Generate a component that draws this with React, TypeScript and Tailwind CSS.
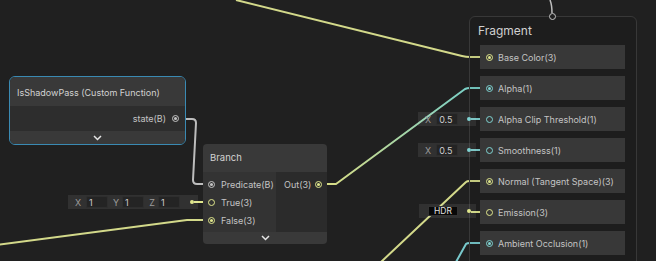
const tones = {
  yellow: { ring: "border-[#dfe68c]", dot: "bg-[#dfe68c]" },
  teal: { ring: "border-[#7fd3d2]", dot: "bg-[#7fd3d2]" },
  gray: { ring: "border-[#c4c4c4]", dot: "bg-[#c4c4c4]" },
};

type Tone = keyof typeof tones;

const Port = ({ tone, filled }: { tone: Tone; filled?: boolean }) => (
  <span
    className={`w-[7px] h-[7px] rounded-full border flex items-center justify-center shrink-0 ${tones[tone].ring}`}
  >
    {filled && <span className={`w-[3px] h-[3px] rounded-full ${tones[tone].dot}`} />}
  </span>
);

const Chevron = () => (
  <svg width="9" height="6" viewBox="0 0 9 6" fill="none">
    <polyline points="1,1 4.5,4.5 8,1" stroke="#e6e6e6" strokeWidth="1.5" />
  </svg>
);

const Dot = ({ tone }: { tone: Tone }) => (
  <span className={`ml-auto mr-[5px] w-[4px] h-[4px] rounded-full ${tones[tone].dot}`} />
);

const Field = ({ value }: { value: string }) => (
  <span className="w-[22px] h-[12px] rounded-[2px] bg-[#242424] border border-[#2e2e2e] text-[#cfcfcf] pl-[2px] flex items-center">
    {value}
  </span>
);

const Wires = () => (
  <svg className="absolute inset-0" width="656" height="261" fill="none" strokeWidth="2" strokeLinejoin="round">
    <defs>
      <linearGradient id="outAlpha" gradientUnits="userSpaceOnUse" x1="330" y1="184" x2="470" y2="88">
        <stop offset="0" stopColor="#d6dc86" />
        <stop offset="1" stopColor="#78cfc6" />
      </linearGradient>
    </defs>
    {/* into Base Color */}
    <path d="M236 0 L462 56 Q466 57 470 57 H486" stroke="#d3d98a" />
    {/* state -> predicate */}
    <path d="M179 119 H192 Q196 119 196 123 L193 180 Q193 184 197 184 H208" stroke="#bdbdbd" />
    {/* out -> alpha */}
    <path d="M322 184 H336 L465 89 Q467 88 470 88 H486" stroke="url(#outAlpha)" />
    {/* into False */}
    <path d="M-4 245 L187 220 H208" stroke="#d3d98a" />
    {/* into Normal */}
    <path d="M381 262 L466 182 Q467 181 470 181 H486" stroke="#d3d98a" />
    {/* into Ambient Occlusion */}
    <path d="M456 262 L466 244 Q467 243 470 243 H486" stroke="#78c9cc" />
    {/* inline value stubs */}
    <path d="M194 202 H208" stroke="#dfe68c" />
    <path d="M471 119 H486" stroke="#7fd3d2" />
    <path d="M471 150 H486" stroke="#7fd3d2" />
    <path d="M471 212 H486" stroke="#dfe68c" />
    {/* top vertex port */}
    <path d="M550 0 Q552 5 552 13" stroke="#bdbdbd" strokeWidth="1.5" />
  </svg>
);

const blocks: { label: string; tone: Tone; filled: boolean }[] = [
  { label: "Base Color(3)", tone: "yellow", filled: true },
  { label: "Alpha(1)", tone: "teal", filled: true },
  { label: "Alpha Clip Threshold(1)", tone: "teal", filled: false },
  { label: "Smoothness(1)", tone: "teal", filled: false },
  { label: "Normal (Tangent Space)(3)", tone: "yellow", filled: true },
  { label: "Emission(3)", tone: "yellow", filled: false },
  { label: "Ambient Occlusion(1)", tone: "teal", filled: true },
];

export default function App() {
  return (
    <div className="relative w-[656px] h-[261px] overflow-hidden bg-[#202020] font-['Inter','Noto_Sans',sans-serif] text-[9px] leading-none text-[#c4c4c4]">
      <Wires />

      {/* IsShadowPass (Custom Function) */}
      <div className="absolute left-[9px] top-[76px] w-[177px] rounded-[6px] border border-[#3a8ab3]">
        <div className="rounded-[5px] overflow-hidden">
          <div className="h-[29px] bg-[#393939] flex items-center pl-[7px] pt-[2px] text-[9px] text-[#d2d2d2]">
            IsShadowPass (Custom Function)
          </div>
          <div className="h-[25px] bg-[#2d2d2d] flex items-center justify-end gap-[6px] pr-[6px]">
            <span>state(B)</span>
            <Port tone="gray" filled />
          </div>
          <div className="h-[13px] bg-[#393939] flex items-center justify-center">
            <Chevron />
          </div>
        </div>
      </div>

      {/* True(3) inline value */}
      <div className="absolute left-[68px] top-[195px] w-[130px] h-[14px] bg-white/[0.08] flex items-center pl-[4px] text-[#9c9c9c]">
        <span className="w-[12px] text-center">X</span>
        <span className="ml-[2px]"><Field value="1" /></span>
        <span className="w-[12px] ml-[2px] text-center">Y</span>
        <Field value="1" />
        <span className="w-[12px] ml-[2px] text-center">Z</span>
        <Field value="1" />
        <span className="ml-auto mr-[4px] w-[4px] h-[4px] rounded-full bg-[#dfe68c]" />
      </div>

      {/* Branch */}
      <div className="absolute left-[203px] top-[144px] w-[124px] rounded-[4px] overflow-hidden">
        <div className="h-[28px] bg-[#393939] flex items-center pl-[7px] text-[9.5px] text-[#d2d2d2]">Branch</div>
        <div className="flex">
          <div className="w-[73px] bg-[#333333] py-[3px]">
            <div className="h-[18px] flex items-center gap-[6px] pl-[5px]">
              <Port tone="gray" filled />
              <span>Predicate(B)</span>
            </div>
            <div className="h-[18px] flex items-center gap-[6px] pl-[5px]">
              <Port tone="yellow" />
              <span>True(3)</span>
            </div>
            <div className="h-[18px] flex items-center gap-[6px] pl-[5px]">
              <Port tone="yellow" filled />
              <span>False(3)</span>
            </div>
          </div>
          <div className="flex-1 bg-[#2b2b2b] py-[3px]">
            <div className="h-[18px] flex items-center justify-between pl-[8px] pr-[5px]">
              <span>Out(3)</span>
              <Port tone="yellow" filled />
            </div>
          </div>
        </div>
        <div className="h-[12px] bg-[#393939] flex items-center justify-center">
          <Chevron />
        </div>
      </div>

      {/* inline values for Fragment */}
      <div className="absolute left-[418px] top-[112px] w-[58px] h-[14px] bg-white/[0.08] flex items-center pl-[7px] text-[#9c9c9c] z-10">
        <span>X</span>
        <span className="ml-[5px]"><Field value="0.5" /></span>
        <Dot tone="teal" />
      </div>
      <div className="absolute left-[418px] top-[143px] w-[58px] h-[14px] bg-white/[0.08] flex items-center pl-[7px] text-[#9c9c9c] z-10">
        <span>X</span>
        <span className="ml-[5px]"><Field value="0.5" /></span>
        <Dot tone="teal" />
      </div>
      <div className="absolute left-[419px] top-[204px] w-[57px] h-[14px] bg-white/[0.08] flex items-center pl-[9px] z-10">
        <span className="w-[30px] h-[10px] bg-[#080808] border border-[#333] text-[#e0e0e0] flex items-center justify-center text-[8.5px]">
          HDR
        </span>
        <Dot tone="yellow" />
      </div>

      {/* Fragment context */}
      <div className="absolute left-[469px] top-[16px] w-[168px] h-[270px] rounded-[6px] border border-[#383838] bg-black/[0.08]">
        <span className="absolute left-[78.5px] -top-[4.5px] w-[7px] h-[7px] rounded-full border border-[#c4c4c4] bg-[#202020]" />
        <div className="h-[28px] flex items-center pl-[8px] text-[12px] text-[#d0d0d0]">Fragment</div>
        <div className="flex flex-col gap-[7px] pl-[10px] pr-[11px]">
          {blocks.map((b) => (
            <div key={b.label} className="h-[24px] bg-[#383838] flex items-center gap-[5px] pl-[6px]">
              <Port tone={b.tone} filled={b.filled} />
              <span>{b.label}</span>
            </div>
          ))}
        </div>
      </div>
    </div>
  );
}
